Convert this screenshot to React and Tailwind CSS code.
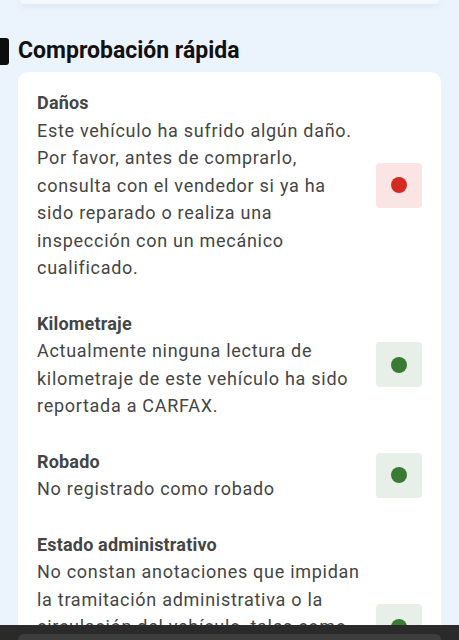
const items = [
  {
    title: "Daños",
    text: "Este vehículo ha sufrido algún daño. Por favor, antes de comprarlo, consulta con el vendedor si ya ha sido reparado o realiza una inspección con un mecánico cualificado.",
    status: "bad",
  },
  {
    title: "Kilometraje",
    text: "Actualmente ninguna lectura de kilometraje de este vehículo ha sido reportada a CARFAX.",
    status: "ok",
  },
  { title: "Robado", text: "No registrado como robado", status: "ok" },
  {
    title: "Estado administrativo",
    text: "No constan anotaciones que impidan la tramitación administrativa o la circulación del vehículo, tales como embargos, precintos, reservas de dominio o bajas temporales registradas en la DGT.",
    status: "ok",
  },
];

function StatusDot({ status }) {
  const bad = status === "bad";
  return (
    <div
      className={`flex h-[45px] w-[46px] shrink-0 items-center justify-center rounded-[4px] ${
        bad ? "bg-[#fbe4e4]" : "bg-[#e8efe8]"
      }`}
    >
      <span className={`h-4 w-4 rounded-full ${bad ? "bg-[#d52a22]" : "bg-[#3a7a35]"}`} />
    </div>
  );
}

export default function App() {
  return (
    <div
      className="relative h-[640px] overflow-hidden bg-[#ebf4fc]"
      style={{ fontFamily: "Roboto, 'Noto Sans', sans-serif" }}
    >
      <div className="mx-[20px] h-[4px] rounded-b-[10px] bg-[#f3f9fe] shadow-[0_2px_6px_rgba(120,150,190,0.18)]" />

      <div className="mt-[33px] flex items-center gap-[9px]">
        <div className="h-[27px] w-[9px] rounded-r-[3px] bg-[#0d0d0d]" />
        <h2 className="text-[23px] font-bold leading-[28px] text-[#111]">Comprobación rápida</h2>
      </div>

      <div className="mx-[18px] mt-[7px] rounded-[10px] bg-white px-[19px] pb-6 pt-[17px]">
        <div className="flex flex-col gap-[28px]">
          {items.map((item) => (
            <div key={item.title} className="flex items-center gap-[14px]">
              <div className="min-w-0 flex-1 text-[18px] leading-[27.5px] tracking-[0.04em] text-[#454545]">
                <p className="font-bold tracking-[0.01em]">{item.title}</p>
                <p>{item.text}</p>
              </div>
              <StatusDot status={item.status} />
            </div>
          ))}
        </div>
      </div>

      <div className="absolute inset-x-0 bottom-0 h-[15px] bg-[#2a2a2a]">
        <div className="mx-[18px] mt-[9px] h-[6px] rounded-t-[12px] bg-[#3e3e3e]" />
      </div>
    </div>
  );
}
